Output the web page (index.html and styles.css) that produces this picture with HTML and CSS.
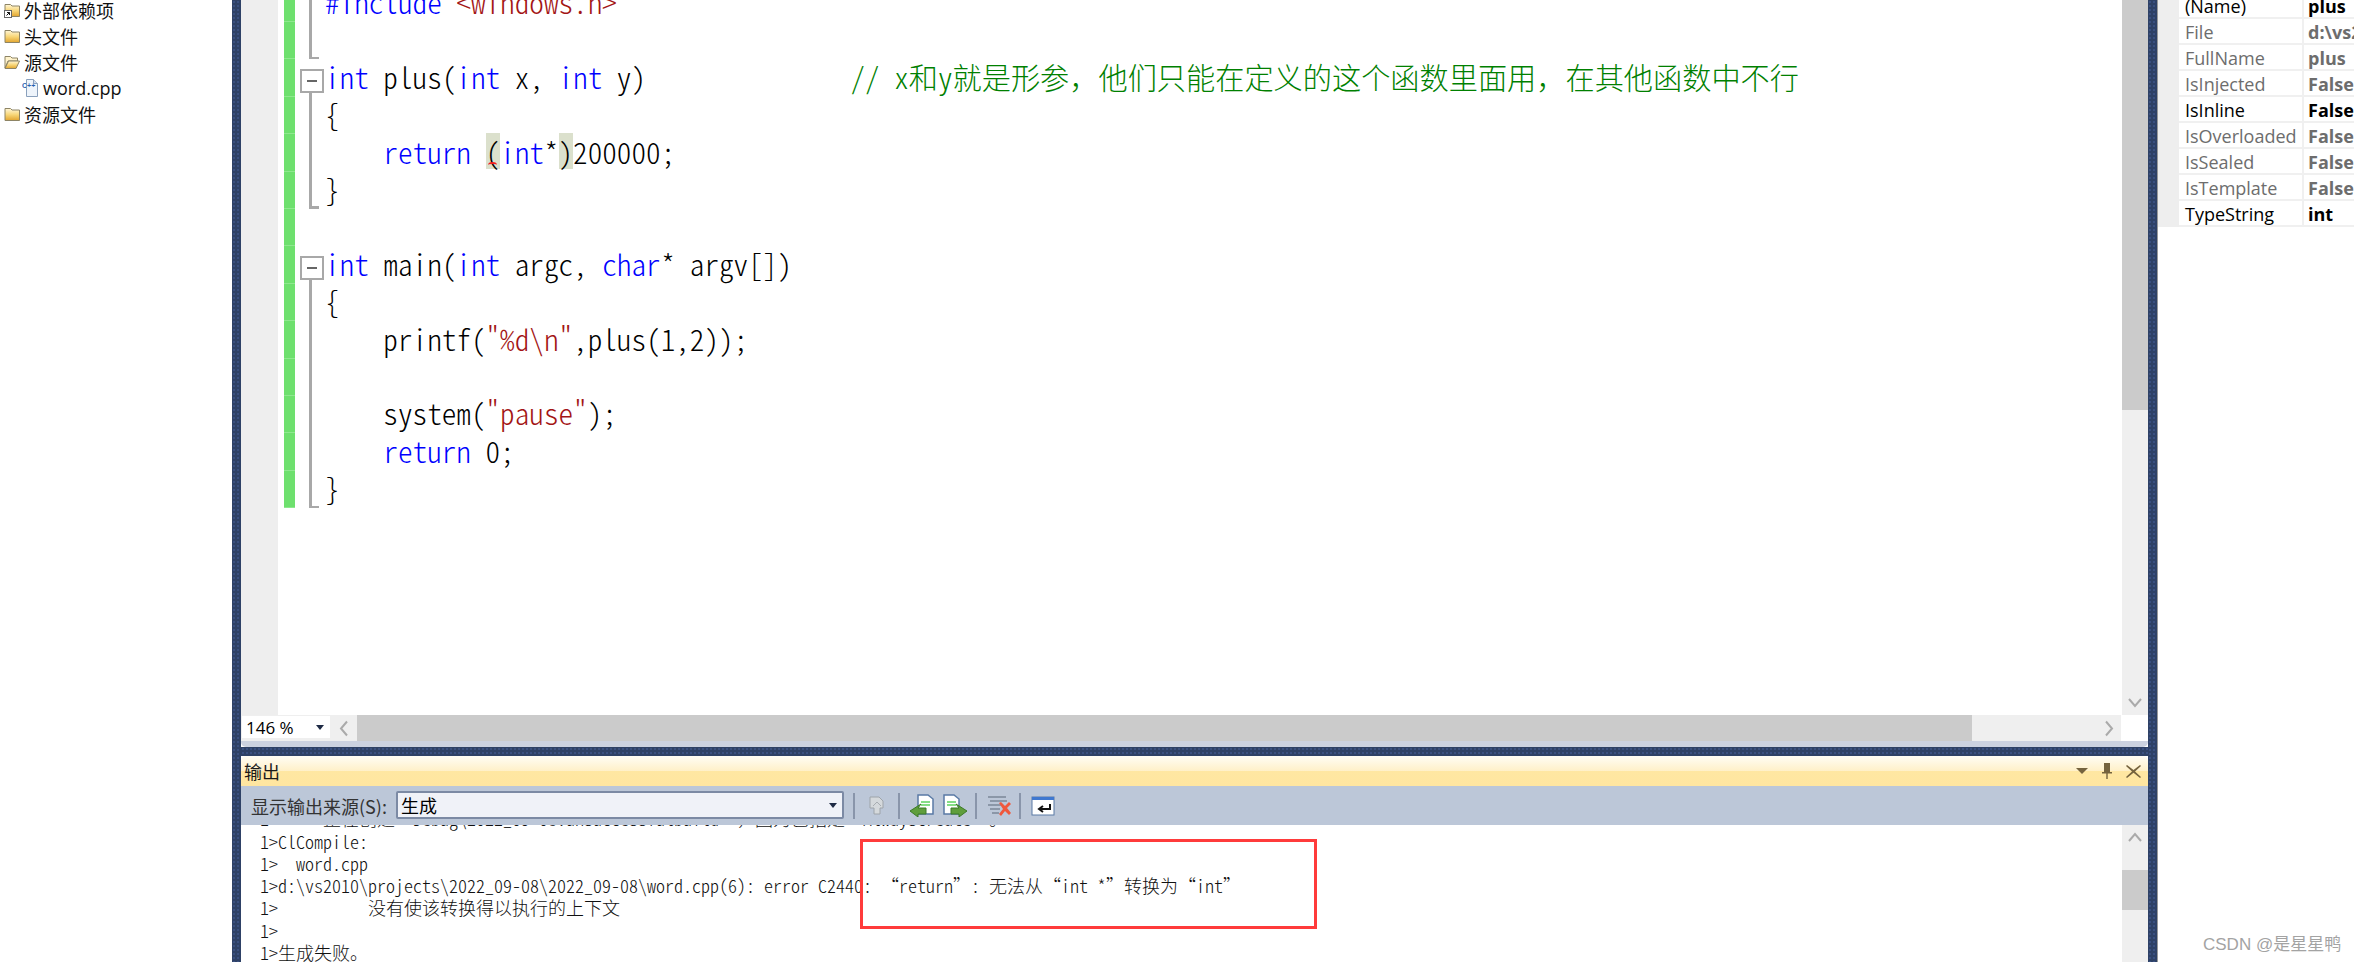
FILE: index.html
```html
<!DOCTYPE html>
<html lang="zh-CN">
<head>
<meta charset="utf-8">
<title>word.cpp</title>
<link rel="stylesheet" href="styles.css">
</head>
<body>
<svg class="defs" width="0" height="0"><defs><linearGradient id="fg" x1="0" y1="0" x2="0" y2="1"><stop offset="0" stop-color="#fff6d8"/><stop offset=".5" stop-color="#f8d77a"/><stop offset="1" stop-color="#e2a52e"/></linearGradient></defs></svg>
<div class="app">
  <aside class="tree">
    <div class="node"><svg class="ico" viewBox="0 0 16 16"><path d="M1 4V2.500h5.500L8 4h7.500v10.500H1z" fill="url(#fg)" stroke="#8d8465"/><rect x=".5" y="8.500" width="7" height="7" fill="#fff" stroke="#666"/><path d="M2.500 13.500l3-3M3 10.500h2.500V13" stroke="#111" fill="none"/></svg><span>外部依赖项</span></div>
    <div class="node"><svg class="ico" viewBox="0 0 16 16"><path d="M1 14.500V2.500h5.500L8 4h7.500v10.500z" fill="url(#fg)" stroke="#8d8465"/></svg><span>头文件</span></div>
    <div class="node"><svg class="ico" viewBox="0 0 16 16"><path d="M1 14V2.500h5.500L8 4h5.500v3H4z" fill="#fff3cc" stroke="#8d8465"/><path d="M1 14.500l3.500-7.500h11L12 14.500z" fill="url(#fg)" stroke="#8d8465"/></svg><span>源文件</span></div>
    <div class="node file"><svg class="ico" viewBox="0 0 16 18"><path d="M4.500.5h7l4 4v13h-11z" fill="#eef4fb" stroke="#8aa0bc"/><path d="M11.500.5v4h4" fill="#cfdcec" stroke="#8aa0bc"/><text class="cpp" x="0" y="9">C++</text></svg><span class="latin">word.cpp</span></div>
    <div class="node"><svg class="ico" viewBox="0 0 16 16"><path d="M1 14.500V2.500h5.500L8 4h7.500v10.500z" fill="url(#fg)" stroke="#8d8465"/></svg><span>资源文件</span></div>
  </aside>
  <div class="sash"></div>
  <main class="center">
    <section class="editor">
      <div class="editor-main">
        <div class="gutter"></div>
        <div class="lines mono">
          <div class="line"><i class="mark"></i><i class="fold bar"></i><pre><b class="k">#include</b> <b class="s">&lt;windows.h&gt;</b></pre></div>
          <div class="line"><i class="mark"></i><i class="fold end"></i><pre> </pre></div>
          <div class="line"><i class="mark"></i><i class="fold open"></i><pre><b class="k">int</b> plus(<b class="k">int</b> x, <b class="k">int</b> y)              <b class="c">// x和y就是形参<span class="fw">&#xFF0C;</span>他们只能在定义的这个函数里面用<span class="fw">&#xFF0C;</span>在其他函数中不行</b></pre></div>
          <div class="line"><i class="mark"></i><i class="fold bar"></i><pre>{</pre></div>
          <div class="line"><i class="mark"></i><i class="fold bar"></i><pre>    <b class="k">return</b> <span class="hl err">(</span><b class="k">int</b>*<span class="hl">)</span>200000;</pre></div>
          <div class="line"><i class="mark"></i><i class="fold end"></i><pre>}</pre></div>
          <div class="line"><i class="mark"></i><i class="fold"></i><pre> </pre></div>
          <div class="line"><i class="mark"></i><i class="fold open"></i><pre><b class="k">int</b> main(<b class="k">int</b> argc, <b class="k">char</b>* argv[])</pre></div>
          <div class="line"><i class="mark"></i><i class="fold bar"></i><pre>{</pre></div>
          <div class="line"><i class="mark"></i><i class="fold bar"></i><pre>    printf(<b class="s">"%d\n"</b>,plus(1,2));</pre></div>
          <div class="line"><i class="mark"></i><i class="fold bar"></i><pre> </pre></div>
          <div class="line"><i class="mark"></i><i class="fold bar"></i><pre>    system(<b class="s">"pause"</b>);</pre></div>
          <div class="line"><i class="mark"></i><i class="fold bar"></i><pre>    <b class="k">return</b> 0;</pre></div>
          <div class="line"><i class="mark"></i><i class="fold end"></i><pre>}</pre></div>
        </div>
        <div class="vscroll">
          <div class="thumb editor-thumb"></div>
          <div class="track"></div>
          <div class="btn"><svg viewBox="0 0 26 25"><path d="M7 9l6 7 6-7"/></svg></div>
        </div>
      </div>
      <div class="hbar">
        <div class="zoombox"><span>146 %</span><svg class="tri" viewBox="0 0 8 5"><path d="M0 0h8L4 5z"/></svg></div>
        <div class="btn hbtn"><svg viewBox="0 0 26 25"><path d="M16 6l-6 7 6 7"/></svg></div>
        <div class="hthumb"></div>
        <div class="track"></div>
        <div class="btn hbtn end"><svg viewBox="0 0 24 25"><path d="M9 6l6 7-6 7"/></svg></div>
        <div class="corner"></div>
      </div>
    </section>
    <div class="hsash"></div>
    <section class="output">
      <header class="title">
        <span class="title-text">输出</span>
        <div class="title-icons">
          <svg class="t-drop" viewBox="0 0 12 6"><path d="M0 0h12L6 6z"/></svg>
          <svg class="t-pin" viewBox="0 0 10 16"><path d="M2 0h6v9H2zM0 9h10v1.500H0zM4.300 10h1.400v6H4.300z"/></svg>
          <svg class="t-x" viewBox="0 0 15 13"><path d="M1 0l6.500 5L14 0l1 1-6 5.500L15 12l-1 1-6.500-5.200L1 13l-1-1 6-5.500L0 1z"/></svg>
        </div>
      </header>
      <div class="toolbar">
        <span class="label">显示输出来源(S):</span>
        <div class="combo"><span>生成</span><svg class="tri" viewBox="0 0 8 5"><path d="M0 0h8L4 5z"/></svg></div>
        <i class="sep"></i>
        <svg class="tool t1" viewBox="0 0 18 19"><path d="M2 1h9l4 4v7h-3v6H6v-6H2z" fill="#d5d9dc" stroke="#9ea4aa"/><path d="M5 10l4-4 4 4" fill="none" stroke="#a8adb2"/></svg>
        <i class="sep"></i>
        <svg class="tool t2" viewBox="0 0 24 23"><path d="M8 1h10l5 4v15H8z" fill="#fff" stroke="#5a7aa5" stroke-width="1.500"/><path d="M11 8h9M11 11h9" stroke="#5fd35f" stroke-width="1.500"/><path d="M11 10L0 17l8 6v-3h8v-6H8z" fill="#5f9e3c" stroke="#3d7a28"/></svg>
        <svg class="tool t3" viewBox="0 0 24 23"><path d="M1 1h10l5 4v15H1z" fill="#fff" stroke="#5a7aa5" stroke-width="1.500"/><path d="M4 8h9M4 11h9" stroke="#5fd35f" stroke-width="1.500"/><path d="M13 10l11 7-8 6v-3H8v-6h8z" fill="#5f9e3c" stroke="#3d7a28"/></svg>
        <i class="sep"></i>
        <svg class="tool t4" viewBox="0 0 25 21"><path d="M1 2h18M3 6h17M1 10h15M3 14h10M5 18h7" stroke="#8b97a8" stroke-width="2"/><path d="M12 8l2-1 4 4 4-4 2 2-4 4 4 5-2 2-4-4-4 5-2-2 4-5z" fill="#f0583c"/></svg>
        <i class="sep"></i>
        <svg class="tool t5" viewBox="0 0 24 20"><rect x="1" y="1" width="22" height="18" fill="#fff" stroke="#5a7aa5"/><rect x="1" y="1" width="22" height="3" fill="#3f78d0"/><path d="M19 8v5H9M12 10l-4 3 4 3" fill="none" stroke="#111" stroke-width="2"/></svg>
      </div>
      <div class="out-body">
        <div class="log mono">
          <pre>1&gt;     正在创建“Debug\2022_09-08.unsuccessfulbuild”<span class="fw">&#xFF0C;</span>因为已指定“AlwaysCreate”。</pre>
          <pre>1&gt;ClCompile:</pre>
          <pre>1&gt;  word.cpp</pre>
          <pre>1&gt;d:\vs2010\projects\2022_09-08\2022_09-08\word.cpp(6): error C2440: “return”: 无法从“int *”转换为“int”</pre>
          <pre>1&gt;          没有使该转换得以执行的上下文</pre>
          <pre>1&gt;</pre>
          <pre>1&gt;生成失败。</pre>
        </div>
        <div class="vscroll">
          <div class="btn"><svg viewBox="0 0 26 25"><path d="M7 16l6-7 6 7"/></svg></div>
          <div class="track short"></div>
          <div class="thumb out-thumb"></div>
          <div class="track"></div>
        </div>
      </div>
      <div class="redbox"></div>
    </section>
  </main>
  <div class="sash edge"></div>
  <aside class="props">
    <div class="row on"><i class="pg"></i><span class="pn">(Name)</span><span class="pv">plus</span></div>
    <div class="row"><i class="pg"></i><span class="pn">File</span><span class="pv">d:\vs2010\projects</span></div>
    <div class="row"><i class="pg"></i><span class="pn">FullName</span><span class="pv">plus</span></div>
    <div class="row"><i class="pg"></i><span class="pn">IsInjected</span><span class="pv">False</span></div>
    <div class="row on"><i class="pg"></i><span class="pn">IsInline</span><span class="pv">False</span></div>
    <div class="row"><i class="pg"></i><span class="pn">IsOverloaded</span><span class="pv">False</span></div>
    <div class="row"><i class="pg"></i><span class="pn">IsSealed</span><span class="pv">False</span></div>
    <div class="row"><i class="pg"></i><span class="pn">IsTemplate</span><span class="pv">False</span></div>
    <div class="row on"><i class="pg"></i><span class="pn">TypeString</span><span class="pv">int</span></div>
  </aside>
</div>
<div class="watermark">CSDN @是星星鸭</div>
</body>
</html>
```
FILE: styles.css
```css
* { box-sizing: border-box; }
html, body { margin: 0; height: 100%; background: #fff; overflow: hidden; }
body { font-family: "Open Sans", "Noto Sans CJK SC", sans-serif; font-size: 18px; color: #000; }
pre { margin: 0; font: inherit; white-space: pre; }
b, i { font-weight: inherit; font-style: normal; }
.defs { position: absolute; }

.app { display: flex; width: 2354px; height: 962px; overflow: hidden; }

/* navy splitters */
.sash, .hsash {
  background-color: #2e4166;
  background-image: radial-gradient(#3a5080 1px, transparent 1px);
  background-size: 4px 4px;
}
.sash { width: 9px; flex: none; }
.sash.edge { width: 10px; border-right: 1px solid #9a9a9a; }
.hsash { height: 9px; flex: none; }

/* solution tree */
.tree { width: 232px; flex: none; margin-top: -3px; font-family: "Noto Sans CJK SC", sans-serif; color: #111; }
.node { height: 26px; display: flex; align-items: center; gap: 4px; padding-left: 4px; line-height: 26px; }
.node.file { padding-left: 22px; gap: 5px; }
.ico { width: 16px; height: 16px; flex: none; }
.file .ico { height: 18px; }
.cpp { font: bold 7px "Liberation Sans", sans-serif; fill: #2a62b0; stroke: #fff; stroke-width: .3px; paint-order: stroke; }
.latin { font-family: "Open Sans", sans-serif; }

/* centre */
.center { width: 1907px; flex: none; display: flex; flex-direction: column; height: 962px; position: relative; }
.mono { font-family: "Noto Sans CJK SC", sans-serif; font-feature-settings: "hwid"; font-weight: 300; }
.fw { font-feature-settings: normal; }

.editor { height: 747px; flex: none; display: flex; flex-direction: column; background: #ccd2e0; border-radius: 0 0 5px 5px; overflow: hidden; }
.editor-main { height: 715px; flex: none; display: flex; background: #fff; overflow: hidden; }
.gutter { width: 37px; flex: none; background: #eee; }
.lines { flex: 1; padding-left: 6px; margin-top: -15.4px; font-size: 29.2px; min-width: 0; }
.line { display: flex; height: 37.4px; line-height: 37.4px; }
.line pre { margin-top: -1.5px; }
.mark { width: 11px; flex: none; background: #6ee06e; border-bottom: 1px solid #8fe88f; }
.fold { width: 30px; flex: none; position: relative; }
.fold.bar::before, .fold.end::before { content: ""; position: absolute; left: 14px; top: 0; bottom: 0; width: 2.5px; background: #a8a8a8; }
.fold.end::after { content: ""; position: absolute; left: 14px; bottom: 0; width: 10px; height: 2.5px; background: #a8a8a8; }
.fold.open::before { content: ""; position: absolute; left: 5px; top: 9.500px; width: 20px; height: 20px; border: 2px solid #a8a8a8; background: linear-gradient(#666, #666) center / 10px 2px no-repeat #fff; }
.fold.open::after { content: ""; position: absolute; left: 14px; top: 31.500px; bottom: 0; width: 2.5px; background: #a8a8a8; }
.k { color: #0000ff; }
.s { color: #a31515; }
.c { color: #008000; }
.hl { display: inline-block; height: 36px; line-height: 36px; background: #dbe0cc; }
.err { position: relative; }
.err::after { content: ""; position: absolute; left: 2px; bottom: 1px; width: 9px; height: 4px; border-top: 2px solid #f02020; border-radius: 50% 50% 0 0; }

.vscroll { width: 26px; margin-left: 1px; flex: none; display: flex; flex-direction: column; background: #efefef; }
.editor-thumb { height: 410px; }
.thumb { background: #cbcbcb; flex: none; }
.track { flex: 1; background: #efefef; }
.track.short { flex: none; height: 20px; }
.out-thumb { height: 40px; }
.btn { height: 25px; flex: none; background: #efefef; }
.btn svg { display: block; width: 100%; height: 100%; }
.btn path { fill: none; stroke: #aaa; stroke-width: 2; }

.hbar { height: 26px; flex: none; display: flex; background: #efefef; }
.zoombox { width: 88px; height: 22px; margin: 1px 1px 0 1px; flex: none; background: #fff; display: flex; align-items: center; justify-content: space-between; padding: 0 6px 0 4px; font-family: "Open Sans", sans-serif; font-size: 17px; }
.tri { width: 8px; height: 5px; flex: none; }
.tri path { fill: #1e2a44; }
.hbtn { width: 26px; height: 26px; }
.hbtn.end { width: 24px; }
.hthumb { width: 1615px; flex: none; background: #cbcbcb; }
.corner { width: 27px; flex: none; background: #fff; }

.output { flex: 1; display: flex; flex-direction: column; min-height: 0; position: relative; }
.title { height: 30px; flex: none; display: flex; align-items: center; justify-content: space-between; padding: 0 7px 0 3px; border-radius: 5px 5px 0 0; background: linear-gradient(#fffdf5 0, #fff0c8 50%, #ffe7a2 50%, #ffe6a0 100%); font-family: "Noto Sans CJK SC", sans-serif; color: #1a1a1a; }
.title-text { font-size: 18px; line-height: 30px; }
.title-icons { display: flex; align-items: center; gap: 14px; }
.title-icons path { fill: #75633e; }
.t-drop { width: 12px; height: 6px; }
.t-pin { width: 10px; height: 16px; }
.t-x { width: 15px; height: 13px; }

.toolbar { height: 39px; flex: none; display: flex; align-items: center; background: #bcc7d8; padding-left: 10px; font-family: "Noto Sans CJK SC", sans-serif; color: #333; }
.label { width: 145px; flex: none; font-size: 18px; }
.combo { width: 448px; height: 28px; flex: none; display: flex; align-items: center; justify-content: space-between; padding: 0 5px 0 3px; background: #f0f2f8; border: 2px solid #7c8aa4; border-radius: 2px; color: #000; margin-top: -1px; }
.combo span { line-height: 24px; font-size: 18px; }
.sep { width: 2px; height: 26px; flex: none; background: #8995aa; }
.combo + .sep { margin-left: 9px; }
.tool { flex: none; }
.t1 { width: 18px; height: 19px; margin: 0 12px 0 13px; }
.t2 { width: 24px; height: 23px; margin: 0 9px 0 10px; }
.t3 { width: 24px; height: 23px; margin-right: 8px; }
.t4 { width: 25px; height: 21px; margin: 0 7px 0 10px; }
.t5 { width: 24px; height: 20px; margin-left: 10px; }

.out-body { flex: 1; min-height: 0; display: flex; background: #fff; overflow: hidden; }
.log { flex: 1; min-width: 0; padding-left: 19px; margin-top: -17.8px; font-size: 18px; line-height: 22.3px; color: #111; }
.redbox { position: absolute; left: 619px; top: 83px; width: 457px; height: 90px; border: 3px solid #ff3b3b; }

/* properties */
.props { flex: 1; min-width: 0; margin-top: -7px; overflow: hidden; font-family: "Open Sans", sans-serif; font-size: 18px; color: #6d6d6d; }
.row { height: 26px; display: flex; line-height: 26px; white-space: nowrap; }
.pg { width: 21px; flex: none; background: #eee; }
.pn { width: 125px; flex: none; padding-left: 6px; border-right: 2px solid #f0f0f0; border-bottom: 2px solid #f0f0f0; }
.pv { flex: 1; padding-left: 4px; font-weight: 700; border-bottom: 2px solid #f0f0f0; overflow: hidden; }
.row.on { color: #000; }

.watermark { position: absolute; left: 2203px; top: 934px; font-family: "Liberation Sans", "Noto Sans CJK SC", sans-serif; font-size: 17px; line-height: 22px; color: #a3a3a3; white-space: nowrap; }
```
